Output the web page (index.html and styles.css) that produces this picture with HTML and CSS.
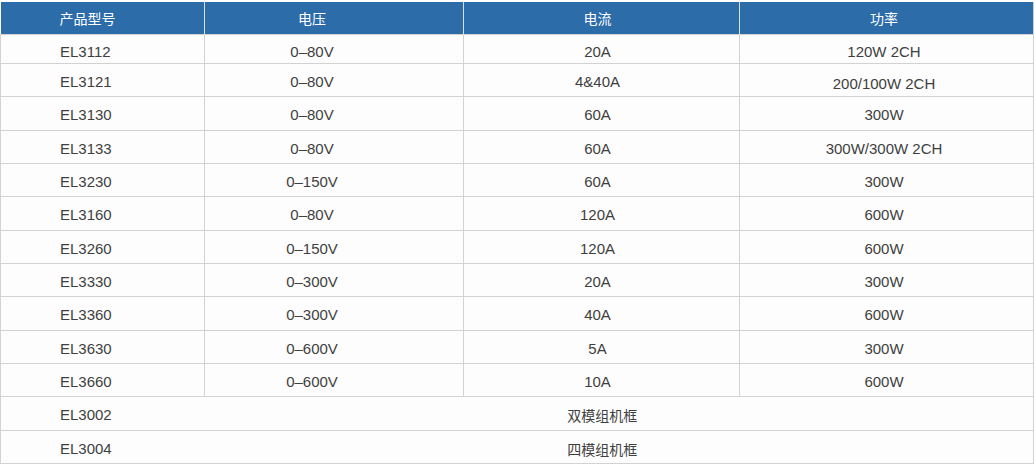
FILE: index.html
```html
<!DOCTYPE html>
<html lang="zh-CN">
<head>
<meta charset="utf-8">
<title>产品型号</title>
<link rel="stylesheet" href="styles.css">
</head>
<body>
<table class="spec">
  <colgroup>
    <col class="c1"><col class="c2"><col class="c3"><col class="c4">
  </colgroup>
  <thead>
    <tr>
      <th class="m">产品型号</th><th class="v">电压</th><th class="a">电流</th><th class="p">功率</th>
    </tr>
  </thead>
  <tbody>
    <tr class="first"><td class="m">EL3112</td><td class="v">0–80V</td><td class="a">20A</td><td class="p">120W 2CH</td></tr>
    <tr><td class="m">EL3121</td><td class="v">0–80V</td><td class="a">4&amp;40A</td><td class="p low">200/100W 2CH</td></tr>
    <tr><td class="m">EL3130</td><td class="v">0–80V</td><td class="a">60A</td><td class="p">300W</td></tr>
    <tr><td class="m">EL3133</td><td class="v">0–80V</td><td class="a">60A</td><td class="p">300W/300W 2CH</td></tr>
    <tr><td class="m">EL3230</td><td class="v">0–150V</td><td class="a">60A</td><td class="p">300W</td></tr>
    <tr><td class="m">EL3160</td><td class="v">0–80V</td><td class="a">120A</td><td class="p">600W</td></tr>
    <tr><td class="m">EL3260</td><td class="v">0–150V</td><td class="a">120A</td><td class="p">600W</td></tr>
    <tr><td class="m">EL3330</td><td class="v">0–300V</td><td class="a">20A</td><td class="p">300W</td></tr>
    <tr><td class="m">EL3360</td><td class="v">0–300V</td><td class="a">40A</td><td class="p">600W</td></tr>
    <tr><td class="m">EL3630</td><td class="v">0–600V</td><td class="a">5A</td><td class="p">300W</td></tr>
    <tr><td class="m">EL3660</td><td class="v">0–600V</td><td class="a">10A</td><td class="p">600W</td></tr>
    <tr class="frame"><td class="m">EL3002</td><td class="span" colspan="3">双模组机框</td></tr>
    <tr class="frame"><td class="m">EL3004</td><td class="span" colspan="3">四模组机框</td></tr>
  </tbody>
</table>
</body>
</html>
```

FILE: styles.css
```css
html, body {
  margin: 0;
  padding: 0;
  background: #ffffff;
}
body {
  padding-top: 2px;
  font-family: "Liberation Sans", Arial, "Noto Sans CJK SC", sans-serif;
  font-size: 15px;
  color: #3f3f3f;
}
.spec {
  border-collapse: collapse;
  table-layout: fixed;
  width: 1033px;
}
.c1 { width: 204px; }
.c2 { width: 259px; }
.c3 { width: 276px; }
.c4 { width: 294px; }

.spec th {
  background: #2c6ca9;
  color: #ffffff;
  font-weight: normal;
  font-family: "Noto Sans CJK SC", sans-serif;
  font-size: 14px;
  height: 32px;
  padding: 0;
  border-left: 1px solid #d7dfe8;
  border-right: 1px solid #d7dfe8;
  line-height: 20px;
  vertical-align: middle;
}
.spec th:first-child { border-left: none; }
.spec th:last-child { border-right: 1px solid #cfcfcf; }

.spec td {
  background: #fdfdfd;
  border: 1px solid #d2d2d2;
  height: 32px;
  padding: 4px 0 0 0;
  line-height: 18px;
  vertical-align: middle;
  text-align: center;
  box-sizing: border-box;
}
.spec tr.first td { height: 29px; padding-top: 5px; }
.spec tbody tr:not(.first) td { height: 33.33px; }

.spec .m { text-align: left; padding-left: 59px; }
.spec .v { text-align: center; padding-right: 44px; }
.spec .a { text-align: center; padding-right: 8px; }
.spec .p { text-align: center; padding-right: 5px; }
.spec td.low { padding-top: 8px; }

.spec tr.frame td.m { border-right: none; }
.spec .span {
  border-left: none;
  text-align: center;
  padding-right: 33px;
  font-family: "Noto Sans CJK SC", sans-serif;
  font-size: 14px;
}
```
